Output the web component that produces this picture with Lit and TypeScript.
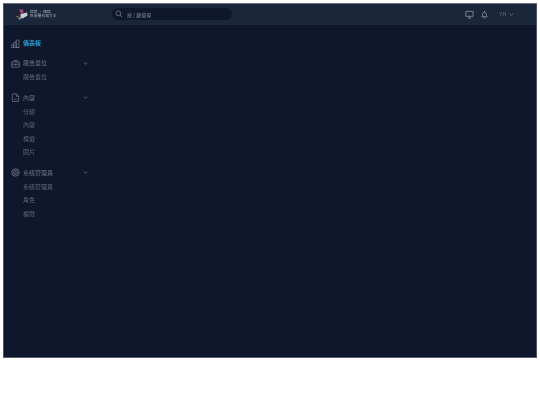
import { LitElement, html, css, svg } from "lit";
import { customElement } from "lit/decorators.js";

const chevron = html`<svg class="chev" viewBox="0 0 10 6"><path d="M1.5 1.2 5 4.6 8.5 1.2" fill="none" stroke="currentColor" stroke-width="1.4"/></svg>`;

const icons: Record<string, unknown> = {
  chart: svg`<path d="M1 14.5V9.5h3.6v5M4.6 14.5V5.5h4v9M8.6 14.5V1.8h4.6v12.7zM.5 14.5h13.2" fill="none" stroke="currentColor" stroke-width="1.1"/>`,
  case: svg`<path d="M1.2 4.8h12.6v8.7H1.2zM5 4.8V2.2h5v2.6M1.2 8.6h12.6M6.4 8.6v1.4h2.2V8.6" fill="none" stroke="currentColor" stroke-width="1.1"/>`,
  doc: svg`<path d="M2.2 2.5a1 1 0 0 1 1-1h5.6l4 4v7.7a1.2 1.2 0 0 1-1.2 1.2H3.4a1.2 1.2 0 0 1-1.2-1.2zM8.8 1.5v4h4M5 10.5h5" fill="none" stroke="currentColor" stroke-width="1.1"/>`,
  gear: svg`<circle cx="7.5" cy="7.5" r="6.2" fill="none" stroke="currentColor" stroke-width="1.2"/><circle cx="7.5" cy="7.5" r="3.6" fill="none" stroke="currentColor" stroke-width="1.1"/><circle cx="7.5" cy="7.5" r="1.4" fill="none" stroke="currentColor" stroke-width="1"/>`,
};

const groups = [
  { icon: "case", label: "廣告單位", items: ["廣告單位"] },
  { icon: "doc", label: "內容", items: ["分類", "內容", "標籤", "圖片"] },
  { icon: "gear", label: "系統管理員", items: ["系統管理員", "角色", "權限"] },
];

@customElement("app-root")
export class AppRoot extends LitElement {
  static styles = css`
    :host {
      display: block;
      height: 405px;
      background: #fff;
      padding: 3px 3px 0;
      box-sizing: border-box;
      font-family: "Noto Sans CJK TC", "Liberation Sans", sans-serif;
    }
    .frame {
      height: 355px;
      display: flex;
      flex-direction: column;
      background: #0e172b;
      border: 1px solid #6b7480;
      border-bottom-color: #59626e;
      border-left-color: #4d5663;
      border-right-color: #4d5663;
      box-sizing: border-box;
      overflow: hidden;
    }
    .top {
      flex: none;
      height: 21px;
      background: #1a273b;
      display: flex;
      align-items: center;
      padding: 0 0 1px 9px;
      box-sizing: border-box;
      color: #98a2ae;
    }
    .logo {
      display: flex;
      align-items: center;
      gap: 2px;
      width: 99px;
      flex: none;
      filter: blur(0.3px);
    }
    .logo svg { width: 15px; height: 11px; }
    .logo-text {
      display: flex;
      flex-direction: column;
      font-size: 3.8px;
      line-height: 4.5px;
      color: #aab2bc;
      white-space: nowrap;
    }
    .search {
      width: 120px;
      height: 12px;
      border-radius: 6px;
      background: #0e172b;
      display: flex;
      align-items: center;
      gap: 4px;
      padding-left: 3px;
      box-sizing: border-box;
      font-size: 5px;
      color: #7f8a97;
      flex: none;
    }
    .search svg { width: 8px; height: 8px; }
    .search span { filter: blur(0.3px); }
    .right {
      margin-left: auto;
      display: flex;
      align-items: center;
      padding-right: 22px;
      color: #7f8a97;
      filter: blur(0.25px);
    }
    .right svg.mon { width: 9px; height: 9px; margin-right: 6px; }
    .right svg.bell { width: 9px; height: 9px; margin-right: 10px; }
    .user { font: 5px "Liberation Sans", sans-serif; margin-right: 3px; color: #6b7684; }
    .right .chev { width: 5px; height: 3px; color: #7f8a97; }
    .side {
      width: 77px;
      padding: 11.3px 0 0 7px;
      display: flex;
      flex-direction: column;
      color: #6a7583;
      font-size: 6px;
      filter: blur(0.3px);
    }
    .row {
      display: flex;
      align-items: center;
      height: 13.5px;
      line-height: 13.5px;
    }
    .row svg.ic { width: 9px; height: 9px; margin-right: 3px; flex: none; color: #7c8793; }
    .row.dash { color: #2a9fd8; font-weight: 700; margin-bottom: 6.5px; }
    .group { display: flex; flex-direction: column; margin-bottom: 7px; }
    .group .head { margin-bottom: 0.5px; }
    .group .chev { width: 5px; height: 3px; margin-left: auto; color: #76818e; }
    .sub { padding-left: 12px; color: #5c6775; }
  `;

  render() {
    return html`<div class="frame">
      <header class="top">
        <div class="logo">
          <svg viewBox="0 0 15 11">
            <path d="M1 5.2 6.5 3.6 8 6 3.5 7.6z" fill="#23232b"/>
            <path d="M2.5 7.6 5.5 6.8 5 8.4z" fill="#a8713f"/>
            <path d="M6 .4h4.4v3.2L7.6 4.6z" fill="#a5436f"/>
            <path d="M7.6 5 14 3.4l.6 3-5 3-2.2-.8z" fill="#c8cdd3"/>
            <path d="M5.2 8.4 8.8 8 7.8 10.6 5.6 10.4z" fill="#8a939d"/>
          </svg>
          <div class="logo-text"><span>燒燒 · 煉燒</span><span>秋收櫃有寫文本</span></div>
        </div>
        <div class="search">
          <svg viewBox="0 0 10 10"><circle cx="4.2" cy="4.2" r="3" fill="none" stroke="currentColor" stroke-width="0.9"/><path d="M6.4 6.4 9 9" stroke="currentColor" stroke-width="0.9"/></svg>
          <span>按 / 鍵搜尋</span>
        </div>
        <div class="right">
          <svg class="mon" viewBox="0 0 10 10"><path d="M1 1.5h8v5.5H1zM5 7v1.6M3 9h4" fill="none" stroke="currentColor" stroke-width="1"/></svg>
          <svg class="bell" viewBox="0 0 10 10"><path d="M2 7.5c.8-.8 1-1.6 1-3a2 2 0 0 1 4 0c0 1.4.2 2.2 1 3zM5 1v1.2M4 8.8h2" fill="none" stroke="currentColor" stroke-width="1"/></svg>
          <span class="user">YH</span>
          ${chevron}
        </div>
      </header>
      <nav class="side">
        <div class="row dash"><svg class="ic" viewBox="0 0 15 15">${icons.chart}</svg>儀表板</div>
        ${groups.map(
          (g) => html`<div class="group">
            <div class="row head"><svg class="ic" viewBox="0 0 15 15">${icons[g.icon]}</svg>${g.label}${chevron}</div>
            ${g.items.map((i) => html`<div class="row sub">${i}</div>`)}
          </div>`
        )}
      </nav>
    </div>`;
  }
}
